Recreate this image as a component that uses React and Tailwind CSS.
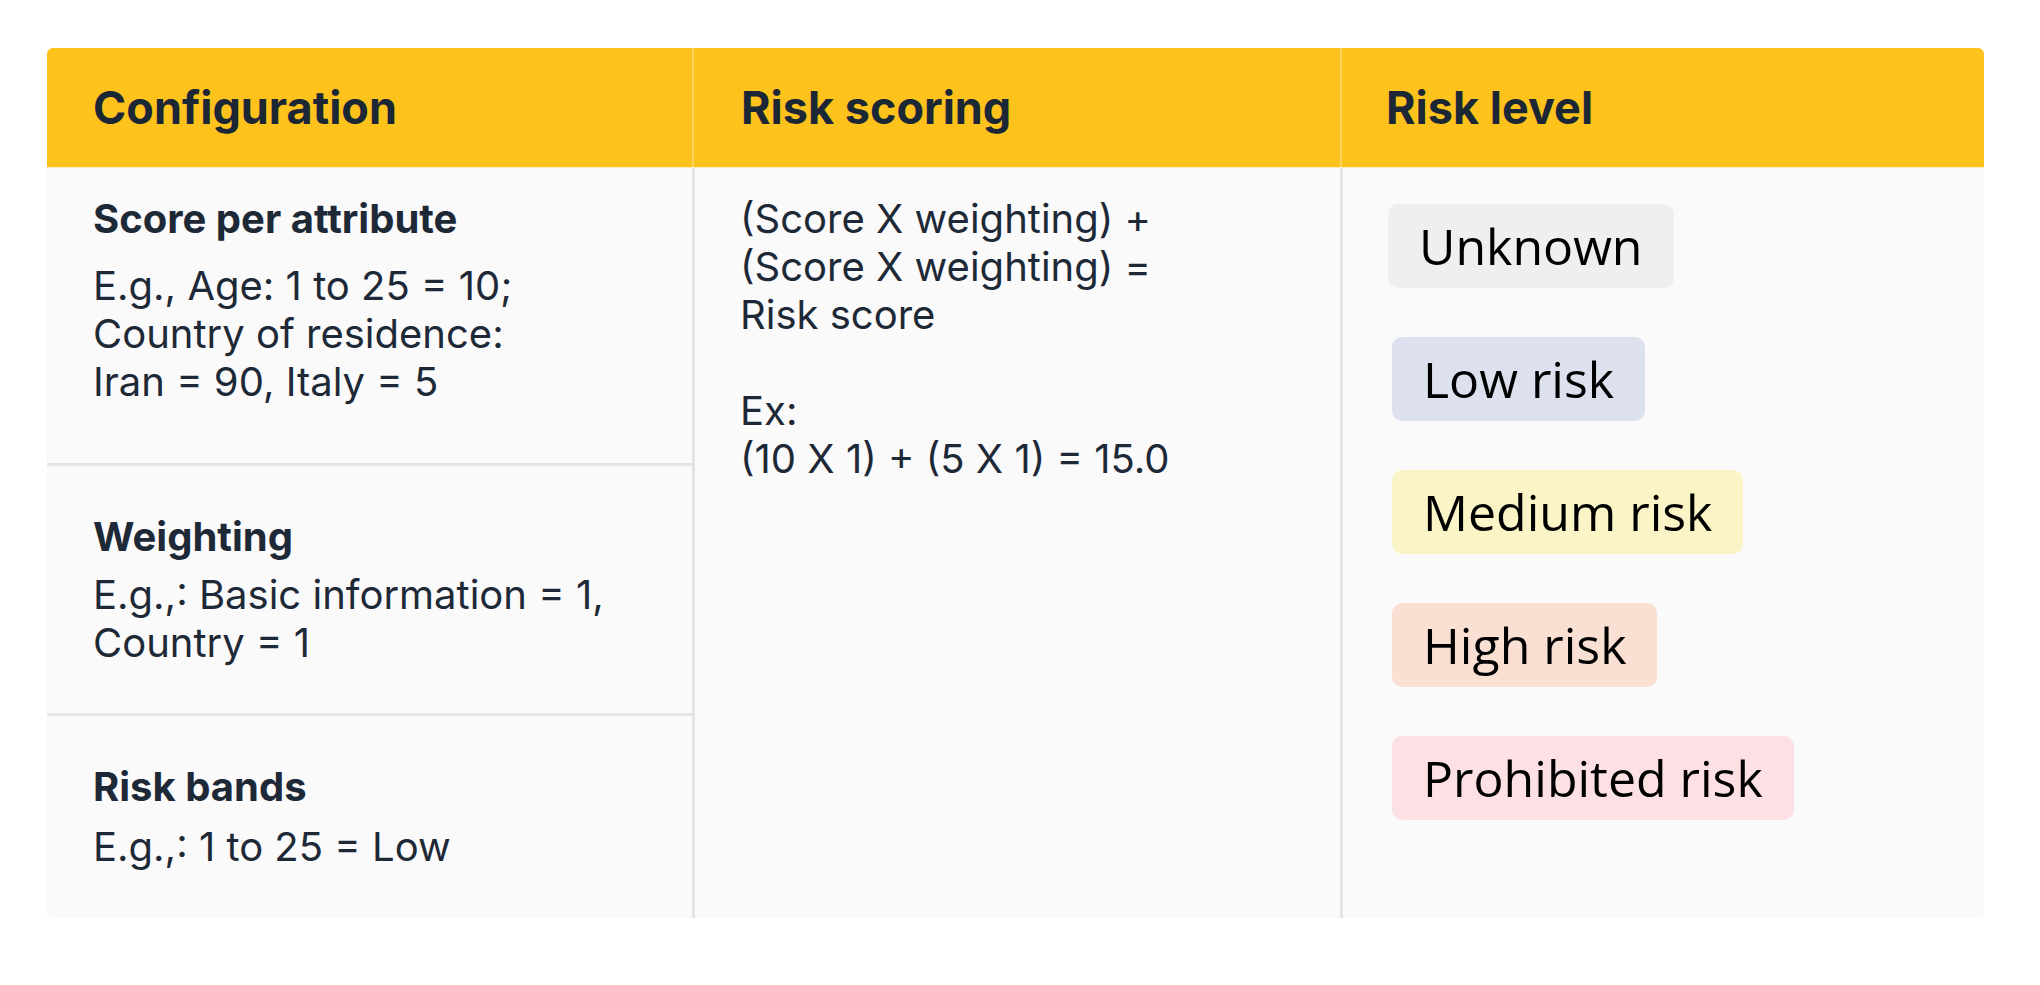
const badges = [
  { label: "Unknown", cls: "bg-[#eeeff1]" },
  { label: "Low risk", cls: "bg-[#dce1ed] ml-[4px]" },
  { label: "Medium risk", cls: "bg-[#faf4c6] ml-[4px]" },
  { label: "High risk", cls: "bg-[#f9e0d3] ml-[4px]" },
  { label: "Prohibited risk", cls: "bg-[#fde0e4] ml-[4px]" },
];

function HeaderCell({ children, className = "" }) {
  return (
    <div className={`flex items-center text-[45px] font-bold ${className}`}>
      {children}
    </div>
  );
}

export default function App() {
  return (
    <div className="min-h-screen bg-white px-[47px] pt-[48px] font-['Inter',sans-serif]">
      <div className="w-[1937px] overflow-hidden rounded-[6px] bg-[#fafafa]">
        <div className="grid h-[120px] grid-cols-[645px_648px_644px] border-b border-[#fdeec4] bg-[#fec21c] text-[#1c2735]">
          <HeaderCell className="pl-[46px]">Configuration</HeaderCell>
          <HeaderCell className="border-l-2 border-[#fdd35c] pl-[47px]">Risk scoring</HeaderCell>
          <HeaderCell className="border-l-2 border-[#fdd35c] pl-[44px]">Risk level</HeaderCell>
        </div>

        <div className="grid grid-cols-[645px_648px_644px] text-[40px] leading-[48px] text-[#1e2937]">
          <div className="flex flex-col">
            <div className="h-[295px] pl-[46px] pt-[27px]">
              <p className="font-bold">Score per attribute</p>
              <p className="mt-[19px]">
                E.g., Age: 1 to 25 = 10;<br />
                Country of residence:<br />
                Iran = 90, Italy = 5
              </p>
            </div>
            <div className="flex h-[250px] flex-col justify-center border-t-[3px] border-[#e5e5e5] pl-[46px]">
              <p className="font-bold">Weighting</p>
              <p className="mt-[10px]">
                E.g.,: Basic information = 1,<br />
                Country = 1
              </p>
            </div>
            <div className="flex h-[205px] flex-col justify-center border-t-[3px] border-[#e5e5e5] pl-[46px]">
              <p className="font-bold">Risk bands</p>
              <p className="mt-[12px]">E.g.,: 1 to 25 = Low</p>
            </div>
          </div>

          <div className="border-l-[3px] border-[#e4e4e4] pl-[45px] pt-[27px]">
            <p>
              (Score X weighting) +<br />
              (Score X weighting) =<br />
              Risk score
            </p>
            <p className="mt-[48px]">
              Ex:<br />
              (10 X 1) + (5 X 1) = 15.0
            </p>
          </div>

          <div className="flex flex-col items-start gap-[49px] border-l-[3px] border-[#e4e4e4] pl-[45px] pt-[36px] pb-[97px]">
            {badges.map((b) => (
              <div
                key={b.label}
                className={`flex h-[84px] items-center rounded-[10px] px-[31px] font-['Open_Sans',sans-serif] text-[50px] leading-none text-black ${b.cls}`}
              >
                {b.label}
              </div>
            ))}
          </div>
        </div>
      </div>
    </div>
  );
}
